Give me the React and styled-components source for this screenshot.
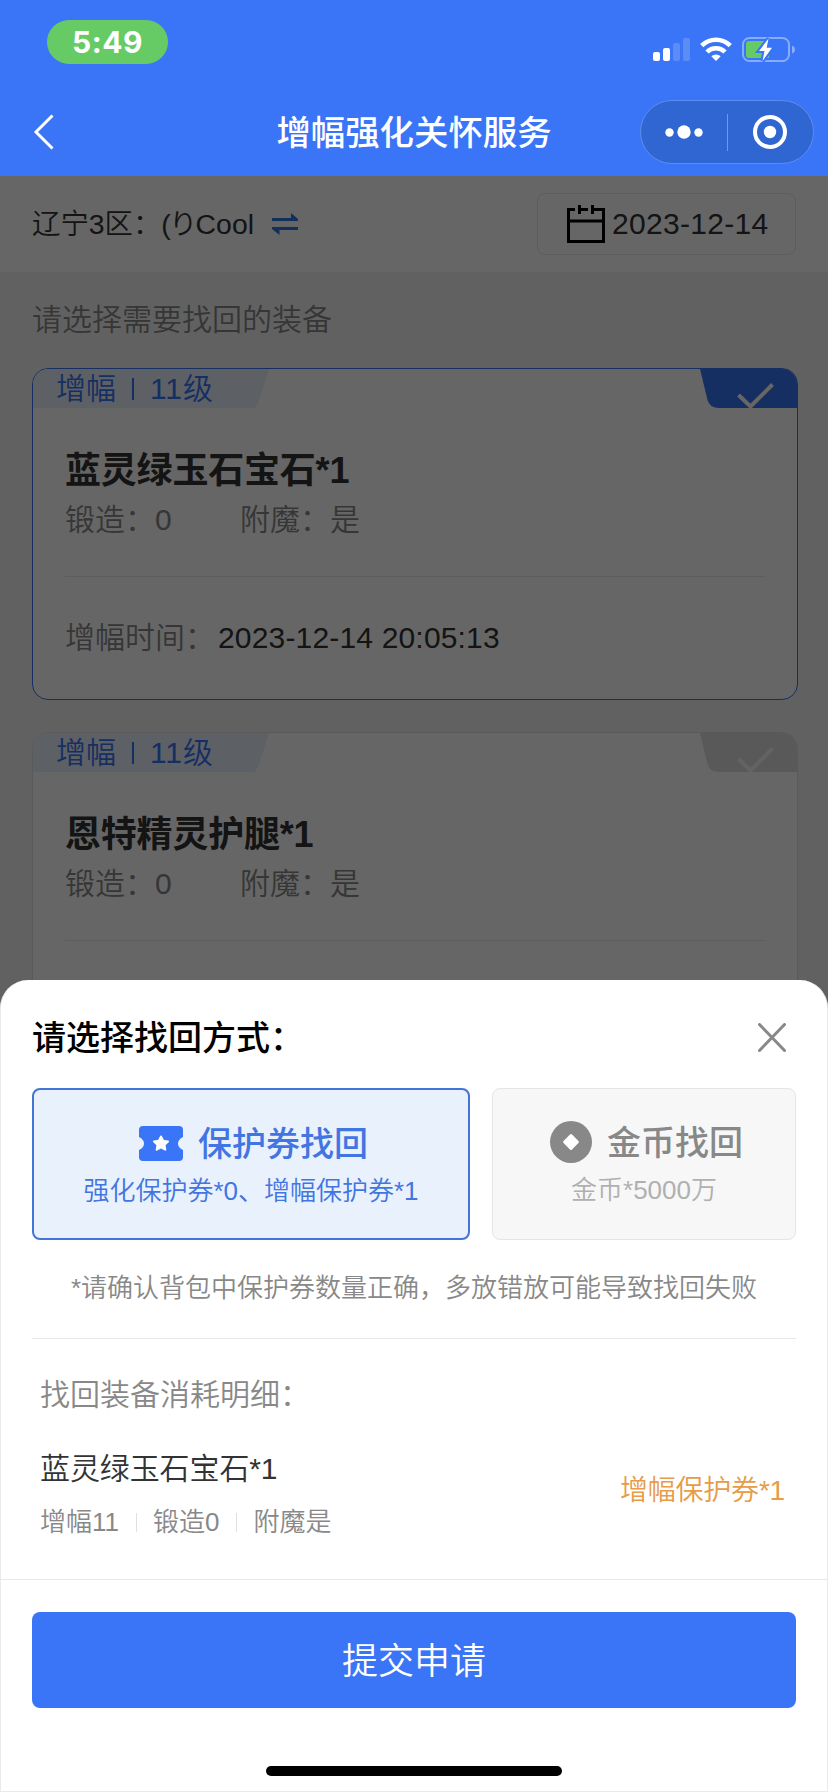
import React from 'react';
import styled, { createGlobalStyle } from 'styled-components';

const GlobalStyle = createGlobalStyle`
  * { box-sizing: border-box; }
  body {
    margin: 0;
    font-family: "Liberation Sans", "Noto Sans CJK SC", sans-serif;
    font-size: 30px;
    font-weight: 350;
    color: #333;
    background: #fff;
  }
`;

const Screen = styled.div`
  position: relative;
  width: 828px;
  height: 1792px;
  overflow: hidden;
  background: #f3f3f3;
`;

const Header = styled.header`
  height: 176px;
  background: #3975f6;
  color: #fff;
`;

const StatusBar = styled.div`
  display: flex;
  justify-content: space-between;
  align-items: flex-start;
  height: 88px;
  padding: 20px 33px 0 47px;
`;

const Clock = styled.div`
  width: 121px;
  height: 44px;
  border-radius: 22px;
  background: #67cb65;
  font: 700 30px/45px Inter, sans-serif;
  letter-spacing: 0.5px;
  text-align: center;
`;

const StatusIcons = styled.div`
  display: flex;
  gap: 10px;
  padding-top: 16px;
`;

const NavBar = styled.div`
  display: grid;
  grid-template-columns: 188px 1fr 188px;
  align-items: center;
  height: 88px;
`;

const BackIcon = styled.svg`
  margin-left: 33px;
`;

const NavTitle = styled.h1`
  margin: 0;
  padding-top: 1px;
  font-size: 34.4px;
  font-weight: 500;
  line-height: 48px;
  text-align: center;
  white-space: nowrap;
`;

const Capsule = styled.div`
  display: flex;
  align-items: center;
  width: 174px;
  height: 64px;
  border: 1px solid #5d8cf0;
  border-radius: 32px;
  background: #3066d2;
`;

const CapsuleHalf = styled.div`
  flex: 1;
  display: flex;
  align-items: center;
  justify-content: center;
  height: 37px;
  & + & { border-left: 1px solid #6f98ec; }
`;

const ServerBar = styled.div`
  display: flex;
  align-items: center;
  justify-content: space-between;
  height: 96px;
  padding: 0 32px;
  background: #fff;
`;

const Server = styled.div`
  display: flex;
  align-items: center;
  gap: 18px;
  font-size: 28.4px;
  line-height: 40px;
`;

const NameMark = styled.span`
  letter-spacing: -1.8px;
`;

const DateBox = styled.div`
  display: flex;
  align-items: center;
  gap: 7px;
  width: 259px;
  height: 62px;
  padding-left: 29px;
  border: 1px solid #e8e8e8;
  border-radius: 8px;
  letter-spacing: 0.3px;
  line-height: 40px;
`;

const Hint = styled.p`
  margin: 0;
  padding: 0 32px;
  height: 96px;
  line-height: 96px;
  color: #888;
`;

const CardList = styled.div`
  display: flex;
  flex-direction: column;
  gap: 32px;
  padding: 0 30px 0 32px;
`;

const Card = styled.article`
  height: 332px;
  border: 1px solid ${(p) => (p.$active ? '#3975f6' : '#e2e2e2')};
  border-radius: 16px;
  background: #fff;
  overflow: hidden;
`;

const CardTop = styled.div`
  display: flex;
  justify-content: space-between;
  height: 39px;
`;

const Level = styled.div`
  display: flex;
  align-items: center;
  gap: 16px;
  width: 236px;
  padding-left: 23px;
  background: #e9f1fc;
  clip-path: polygon(0 0, 100% 0, 95.5% 86%, 94% 100%, 0 100%);
  color: #3975f6;
  line-height: 39px;
`;

const LevelText = styled.span`
  letter-spacing: 0.9px;
`;

const LevelBar = styled.i`
  width: 2px;
  height: 22px;
  background: #3975f6;
`;

const CardBody = styled.div`
  padding: 39px 32px 0;
`;

const ItemTitle = styled.h2`
  margin: 0;
  font-size: 36px;
  font-weight: 700;
  line-height: 48px;
  letter-spacing: -0.2px;
`;

const Attrs = styled.div`
  display: flex;
  height: 82px;
  padding-top: 5px;
  border-bottom: 1px solid #e8e8e8;
  line-height: 40px;
  color: #888;
`;

const Attr = styled.span`
  width: 175px;
`;

const Time = styled.div`
  padding-top: 41px;
  line-height: 40px;
  color: #888;
`;

const TimeValue = styled.span`
  margin-left: 3px;
  letter-spacing: 0.17px;
  color: #333;
`;

const Overlay = styled.div`
  position: absolute;
  inset: 176px 0 0;
  display: flex;
  flex-direction: column;
  justify-content: flex-end;
  background: rgba(0, 0, 0, 0.6);
`;

const Sheet = styled.section`
  height: 812px;
  border: 1px solid #eaeaea;
  border-top: 0;
  border-radius: 28px 28px 0 0;
  background: #fff;
`;

const SheetHead = styled.div`
  display: flex;
  align-items: center;
  justify-content: space-between;
  height: 108px;
  padding: 7px 41px 0 31px;
`;

const SheetTitle = styled.h2`
  margin: 0;
  font-size: 34px;
  font-weight: 500;
  line-height: 48px;
  color: #000;
`;

const SheetBody = styled.div`
  height: 491px;
  padding: 0 31px;
`;

const Options = styled.div`
  display: grid;
  grid-template-columns: 438px 304px;
  gap: 22px;
`;

const Option = styled.div`
  display: flex;
  flex-direction: column;
  align-items: center;
  height: 152px;
  padding-top: 29px;
  border: ${(p) => (p.$active ? '2px solid #4474d6' : '1px solid #e4e4e4')};
  border-radius: 8px;
  background: ${(p) => (p.$active ? '#e9f1fc' : '#f7f7f7')};
  color: ${(p) => (p.$active ? '#4275e2' : '#888')};
`;

const OptionTitle = styled.div`
  display: flex;
  align-items: center;
  gap: 15px;
  height: 48px;
  padding-left: 5px;
  font-size: 34px;
  font-weight: 500;
`;

const OptionName = styled.span`
  padding-top: 2px;
  line-height: 48px;
`;

const OptionCost = styled.div`
  font-size: 26px;
  line-height: 48px;
  color: ${(p) => (p.$active ? '#4275e2' : '#b0b0b0')};
`;

const Note = styled.p`
  margin: 0;
  height: 99px;
  border-bottom: 1px solid #e8e8e8;
  font-size: 26px;
  line-height: 96px;
  text-align: center;
  color: #888;
`;

const DetailTitle = styled.h3`
  margin: 36px 8px 0;
  font-size: 30px;
  font-weight: 350;
  line-height: 40px;
  color: #888;
`;

const Detail = styled.div`
  display: flex;
  align-items: center;
  justify-content: space-between;
  margin: 34px 11px 0 8px;
`;

const DetailName = styled.div`
  line-height: 40px;
  letter-spacing: -0.1px;
`;

const DetailMeta = styled.div`
  display: flex;
  align-items: center;
  margin-top: 18px;
  font-size: 26px;
  line-height: 30px;
  color: #888;
`;

const MetaBar = styled.i`
  width: 1px;
  height: 19px;
  margin: 0 16px 0 17px;
  background: #e0e0e0;
`;

const Cost = styled.div`
  padding-bottom: 4px;
  font-size: 28px;
  line-height: 40px;
  letter-spacing: -0.2px;
  color: #e69c48;
`;

const Footer = styled.footer`
  display: flex;
  flex-direction: column;
  align-items: center;
  padding: 32px 31px 0;
  border-top: 1px solid #e8e8e8;
`;

const Submit = styled.button`
  width: 100%;
  height: 96px;
  padding: 3px 0 0;
  border: 0;
  border-radius: 8px;
  background: #3975f6;
  color: #fff;
  font: inherit;
  font-size: 36px;
  line-height: 92px;
`;

const HomeIndicator = styled.div`
  width: 296px;
  height: 10px;
  margin-top: 58px;
  border-radius: 5px;
  background: #000;
`;

const SignalIcon = () => (
  <svg width="37" height="25" viewBox="0 0 37 25" fill="#fff">
    <rect x="0" y="16" width="7" height="9" rx="2" />
    <rect x="10" y="12" width="7" height="13" rx="2" />
    <rect x="20" y="7" width="7" height="18" rx="2" opacity=".18" />
    <rect x="30" y="2" width="7" height="23" rx="2" opacity=".18" />
  </svg>
);

const WifiIcon = () => (
  <svg width="32" height="25" viewBox="0 0 32 25">
    <g fill="none" stroke="#fff" strokeWidth="4.6">
      <path d="M1.7 9.6 A20.3 20.3 0 0 1 30.3 9.6" />
      <path d="M7 16 A12.7 12.7 0 0 1 25 16" />
    </g>
    <path d="M16 25 L11.3 20.3 A6.8 6.8 0 0 1 20.7 20.3 Z" fill="#fff" />
  </svg>
);

const BatteryIcon = () => (
  <svg width="53" height="27" viewBox="0 0 53 27">
    <rect x="1" y="2" width="46" height="23" rx="6.5" fill="none" stroke="#fff" strokeOpacity=".4" strokeWidth="2" />
    <path d="M50 9.5 Q53 10.5 53 13.5 Q53 16.5 50 17.5 Z" fill="#fff" fillOpacity=".4" />
    <path d="M7 5 H27 V22 H7 Q4 22 4 19 V8 Q4 5 7 5 Z" fill="#67cb65" />
    <path d="M26.5 2.5 L17 15 H22.5 L20.5 25 L30 11.8 H24.7 Z" fill="#fff" stroke="#3975f6" strokeWidth="4" paintOrder="stroke" />
  </svg>
);

const SwapIcon = () => (
  <svg width="27" height="22" viewBox="0 0 27 22" fill="#2d7be0">
    <path d="M0 5 H19 V0 L26 6 V8 H0 Z" />
    <path d="M26 17 H7.5 V22 L0 16 V14 H26 Z" />
  </svg>
);

const CalendarIcon = () => (
  <svg width="38" height="38" viewBox="0 0 38 38" fill="none" stroke="#000" strokeWidth="3">
    <path d="M8 4.5 H1.5 V36.5 H36.5 V4.5 H31" />
    <path d="M12.5 0 V9 M25.5 0 V9 M13 4.5 H21 M26 4.5 H31 M1.5 16 H36.5" />
  </svg>
);

const CheckRibbon = ({ active }) => (
  <svg width="98" height="39" viewBox="0 0 98 39">
    <path d="M1 0 H98 V39 H19 Q10.5 38.5 8.5 31 Z" fill={active ? '#3975f6' : '#dedede'} />
    <path d="M39.5 26 L51.5 37.5 L73.5 15.5" fill="none" stroke={active ? '#fff' : '#f7f7f7'} strokeWidth="4" />
  </svg>
);

const TicketIcon = () => (
  <svg width="44" height="35" viewBox="0 0 44 35">
    <path
      d="M4 0 H40 Q44 0 44 4 V11 Q39 13.5 39 17.5 Q39 21.5 44 24 V31 Q44 35 40 35 H4 Q0 35 0 31 V24 Q5 21.5 5 17.5 Q5 13.5 0 11 V4 Q0 0 4 0 Z"
      fill="#3975f6"
    />
    <path
      d="M22 10.5 L24.2 14.8 L29 15.5 L25.5 18.9 L26.3 23.7 L22 21.4 L17.7 23.7 L18.5 18.9 L15 15.5 L19.8 14.8 Z"
      fill="#fff" stroke="#fff" strokeWidth="2" strokeLinejoin="round"
    />
  </svg>
);

const CoinIcon = () => (
  <svg width="42" height="42" viewBox="0 0 42 42">
    <circle cx="21" cy="21" r="21" fill="#888" />
    <rect x="15" y="15" width="12" height="12" rx="1.5" fill="#fff" transform="rotate(45 21 21)" />
  </svg>
);

const CloseIcon = () => (
  <svg width="28" height="30" viewBox="0 0 28 30" stroke="#888" strokeWidth="3" strokeLinecap="round">
    <path d="M1.5 1.5 L26.5 27.500 M26.5 1.5 L1.5 27.500" />
  </svg>
);

const EquipmentCard = ({ name, time, active }) => (
  <Card $active={active}>
    <CardTop>
      <Level>
        <span>增幅</span>
        <LevelBar />
        <LevelText>11级</LevelText>
      </Level>
      <CheckRibbon active={active} />
    </CardTop>
    <CardBody>
      <ItemTitle>{name}</ItemTitle>
      <Attrs>
        <Attr>锻造：0</Attr>
        <Attr>附魔：是</Attr>
      </Attrs>
      <Time>
        增幅时间：<TimeValue>{time}</TimeValue>
      </Time>
    </CardBody>
  </Card>
);

export default function App() {
  return (
    <Screen>
      <GlobalStyle />
      <Header>
        <StatusBar>
          <Clock>5:49</Clock>
          <StatusIcons>
            <SignalIcon />
            <WifiIcon />
            <BatteryIcon />
          </StatusIcons>
        </StatusBar>
        <NavBar>
          <BackIcon width="22" height="38" viewBox="0 0 22 38" fill="none" stroke="#fff" strokeWidth="3">
            <path d="M19.5 2.5 L3 19 L19.5 35.5" />
          </BackIcon>
          <NavTitle>增幅强化关怀服务</NavTitle>
          <Capsule>
            <CapsuleHalf>
              <svg width="38" height="14" viewBox="0 0 38 14" fill="#fff">
                <circle cx="4.5" cy="7.5" r="4.2" />
                <circle cx="19" cy="7" r="6.7" />
                <circle cx="33.5" cy="7.5" r="4.2" />
              </svg>
            </CapsuleHalf>
            <CapsuleHalf>
              <svg width="34" height="34" viewBox="0 0 34 34">
                <circle cx="17" cy="17" r="15" fill="none" stroke="#fff" strokeWidth="4" />
                <circle cx="17" cy="17" r="6.2" fill="#fff" />
              </svg>
            </CapsuleHalf>
          </Capsule>
        </NavBar>
      </Header>

      <ServerBar>
        <Server>
          <span>辽宁3区：<NameMark>(り</NameMark>Cool</span>
          <SwapIcon />
        </Server>
        <DateBox>
          <CalendarIcon />
          2023-12-14
        </DateBox>
      </ServerBar>
      <Hint>请选择需要找回的装备</Hint>
      <CardList>
        <EquipmentCard active name="蓝灵绿玉石宝石*1" time="2023-12-14 20:05:13" />
        <EquipmentCard name="恩特精灵护腿*1" />
      </CardList>

      <Overlay>
        <Sheet>
          <SheetHead>
            <SheetTitle>请选择找回方式：</SheetTitle>
            <CloseIcon />
          </SheetHead>
          <SheetBody>
            <Options>
              <Option $active>
                <OptionTitle>
                  <TicketIcon />
                  <OptionName>保护券找回</OptionName>
                </OptionTitle>
                <OptionCost $active>强化保护券*0、增幅保护券*1</OptionCost>
              </Option>
              <Option>
                <OptionTitle>
                  <CoinIcon />
                  <OptionName>金币找回</OptionName>
                </OptionTitle>
                <OptionCost>金币*5000万</OptionCost>
              </Option>
            </Options>
            <Note>*请确认背包中保护券数量正确，多放错放可能导致找回失败</Note>
            <DetailTitle>找回装备消耗明细：</DetailTitle>
            <Detail>
              <div>
                <DetailName>蓝灵绿玉石宝石*1</DetailName>
                <DetailMeta>
                  增幅11
                  <MetaBar />
                  锻造0
                  <MetaBar />
                  附魔是
                </DetailMeta>
              </div>
              <Cost>增幅保护券*1</Cost>
            </Detail>
          </SheetBody>
          <Footer>
            <Submit>提交申请</Submit>
            <HomeIndicator />
          </Footer>
        </Sheet>
      </Overlay>
    </Screen>
  );
}
